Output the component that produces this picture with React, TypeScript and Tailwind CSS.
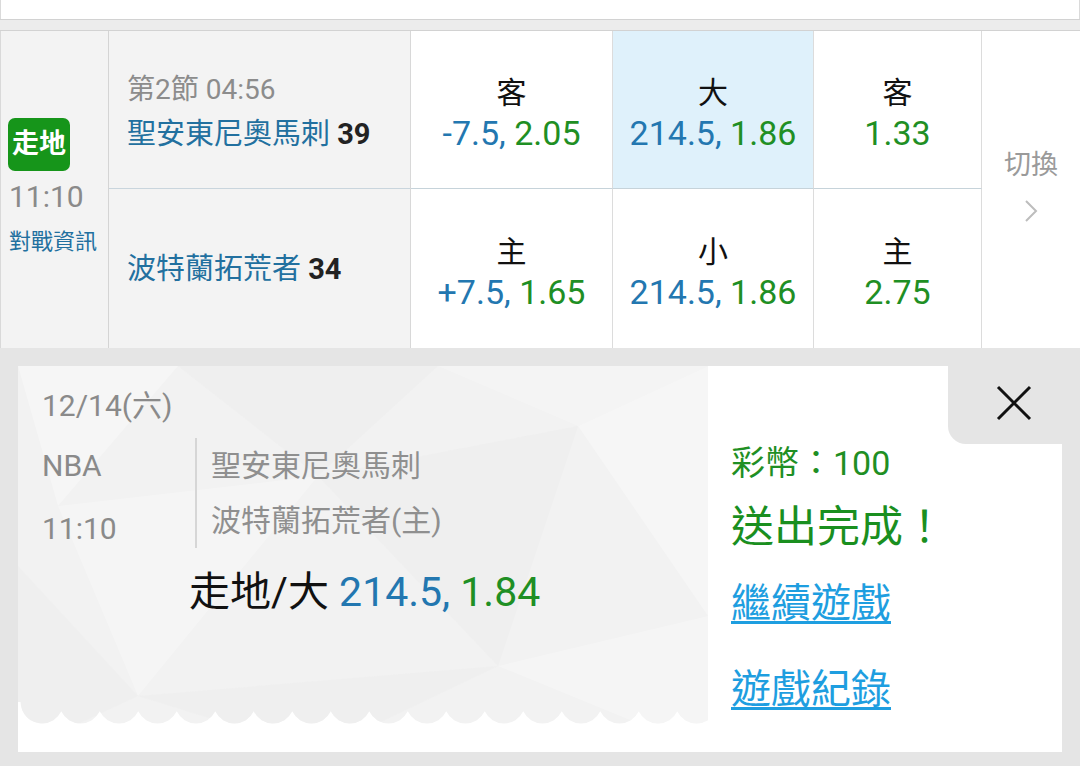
import React from 'react'

const tri = [
  { p: '0,0 160,0 40,140', f: '#ffffff', o: 0.3 },
  { p: '160,0 420,0 300,110', f: '#ebebeb', o: 0.35 },
  { p: '40,140 300,110 120,330', f: '#ffffff', o: 0.25 },
  { p: '300,110 560,60 480,300', f: '#ececec', o: 0.4 },
  { p: '560,60 690,0 690,250', f: '#ffffff', o: 0.3 },
  { p: '420,0 690,0 560,60', f: '#ffffff', o: 0.2 },
  { p: '120,330 480,300 300,386', f: '#ebebeb', o: 0.35 },
  { p: '480,300 690,250 690,386', f: '#ffffff', o: 0.25 },
  { p: '0,200 120,330 0,386', f: '#ececec', o: 0.35 },
]

function OddsCell({
  label,
  line,
  odds,
  active,
  bottom,
  w,
}: {
  label: string
  line?: string
  odds: string
  active?: boolean
  bottom?: boolean
  w: string
}) {
  return (
    <div
      className={`${w} flex flex-col items-center justify-center pt-[7px] border-r border-[#dcdcdc] ${
        bottom ? 'flex-1' : 'h-[158px] border-b border-b-[#c6d3da]'
      } ${active ? 'bg-[#dff1fb]' : 'bg-white'}`}
    >
      <div className="text-[30px] leading-[41px] text-[#111]">{label}</div>
      <div className="text-[34px] leading-[41px] whitespace-nowrap">
        {line && <span className="text-[#2377b0]">{line}, </span>}
        <span className="text-[#1f8f24]">{odds}</span>
      </div>
    </div>
  )
}

function OddsColumn(props: { top: any; bot: any; w: string }) {
  return (
    <div className="flex flex-col">
      <OddsCell {...props.top} w={props.w} />
      <OddsCell {...props.bot} w={props.w} bottom />
    </div>
  )
}

function LeftPanelBg() {
  const circles = []
  for (let i = 0; i < 19; i++) circles.push(24 + i * 38.5)
  return (
    <svg className="absolute inset-0" width="690" height="386" viewBox="0 0 690 386">
      <defs>
        <clipPath id="scallop">
          <rect x="0" y="0" width="690" height="336" />
          {circles.map((cx) => (
            <circle key={cx} cx={cx} cy="336" r="21.4" />
          ))}
        </clipPath>
      </defs>
      <g clipPath="url(#scallop)">
        <rect x="0" y="0" width="690" height="386" fill="#f2f2f2" />
        {tri.map((t) => (
          <polygon key={t.p} points={t.p} fill={t.f} opacity={t.o} />
        ))}
      </g>
    </svg>
  )
}

export default function App() {
  return (
    <div className="w-[1080px] h-[766px] overflow-hidden bg-[#e5e5e5] font-[Roboto,'Noto_Sans_CJK_TC',sans-serif]">
      <div className="h-[19px] bg-white border-l border-r border-[#dadada]" />
      <div className="h-[12px] bg-[#ececec] border-y border-[#d2d2d2]" />

      {/* match table */}
      <div className="flex h-[317px] border-l border-[#d9d9d9]">
        <div className="w-[108px] bg-[#f3f3f3] border-r border-[#d4d4d4] pl-[7px] pt-[87px]">
          <div className="w-[62px] h-[53px] rounded-[7px] bg-[#16951a] flex items-center justify-center text-white font-bold text-[27px] leading-none">
            走地
          </div>
          <div className="text-[30px] leading-[34px] text-[#8a8a8a] mt-[9px] pl-[1px]">11:10</div>
          <div className="text-[22px] leading-[28px] text-[#22709f] mt-[14px] pl-[1px]">對戰資訊</div>
        </div>

        <div className="w-[302px] flex flex-col bg-[#f3f3f3] border-r border-[#d8d8d8]">
          <div className="h-[158px] border-b border-[#c9d5dd] pl-[18px] flex flex-col justify-center pt-[5px]">
            <div className="text-[28px] leading-[45px] text-[#8c8c8c]">第2節 04:56</div>
            <div className="text-[29px] leading-[45px] text-[#22709f] whitespace-nowrap">
              聖安東尼奧馬刺 <span className="font-bold text-[#222]">39</span>
            </div>
          </div>
          <div className="flex-1 pl-[18px] flex items-center pt-[2px]">
            <div className="text-[29px] leading-[45px] text-[#22709f] whitespace-nowrap">
              波特蘭拓荒者 <span className="font-bold text-[#222]">34</span>
            </div>
          </div>
        </div>

        <OddsColumn
          w="w-[202px]"
          top={{ label: '客', line: '-7.5', odds: '2.05' }}
          bot={{ label: '主', line: '+7.5', odds: '1.65' }}
        />
        <OddsColumn
          w="w-[201px]"
          top={{ label: '大', line: '214.5', odds: '1.86', active: true }}
          bot={{ label: '小', line: '214.5', odds: '1.86' }}
        />
        <OddsColumn w="w-[168px]" top={{ label: '客', odds: '1.33' }} bot={{ label: '主', odds: '2.75' }} />

        <div className="flex-1 bg-white flex flex-col items-center justify-center pb-[8px]">
          <div className="text-[27px] leading-[34px] text-[#9a9a9a]">切換</div>
          <svg width="14" height="24" viewBox="0 0 14 24" className="mt-[17px]">
            <path d="M2 2 L12 12 L2 22" fill="none" stroke="#bdbdbd" strokeWidth="2" />
          </svg>
        </div>
      </div>

      {/* result card */}
      <div className="pl-[18px] pt-[18px]">
        <div className="relative flex w-[1044px] h-[386px] bg-white">
          <div className="relative w-[690px] h-full">
            <LeftPanelBg />
            <div className="relative pl-[24px] pt-[20px]">
              <div className="text-[30px] leading-[40px] text-[#8a8a8a]">12/14(六)</div>
              <div className="flex mt-[12px]">
                <div className="w-[153px] text-[30px] text-[#8a8a8a]">
                  <div className="leading-[56px]">NBA</div>
                  <div className="leading-[56px] mt-[7px]">11:10</div>
                </div>
                <div className="self-start h-[110px] border-l-2 border-[#d6d6d6] pl-[14px] text-[30px] leading-[55px] text-[#8f8f8f]">
                  <div>聖安東尼奧馬刺</div>
                  <div>波特蘭拓荒者(主)</div>
                </div>
              </div>
              <div className="pl-[147px] mt-[10px] text-[41px] leading-[50px] whitespace-nowrap">
                <span className="text-[#111]">走地/大 </span>
                <span className="text-[#2377b0]">214.5, </span>
                <span className="text-[#1f8f24]">1.84</span>
              </div>
            </div>
          </div>

          <div className="flex-1 pl-[23px] pt-[77px] flex flex-col items-start">
            <div className="text-[34px] leading-[40px] text-[#1f8f24]">彩幣：100</div>
            <div className="text-[43px] leading-[48px] text-[#1a8f1f] mt-[20px]">送出完成！</div>
            <a className="text-[40px] leading-[48px] text-[#1e9ee0] underline decoration-[3px] underline-offset-[4px] mt-[29px]">
              繼續遊戲
            </a>
            <a className="text-[40px] leading-[48px] text-[#1e9ee0] underline decoration-[3px] underline-offset-[4px] mt-[38px]">
              遊戲紀錄
            </a>
          </div>

          <div className="absolute top-0 right-0 w-[114px] h-[78px] bg-[#e5e5e5] rounded-bl-[18px] flex items-center justify-center pl-[18px] pb-[4px]">
            <svg width="36" height="36" viewBox="0 0 36 36">
              <path d="M2 2 L34 34 M34 2 L2 34" stroke="#111" strokeWidth="3" fill="none" />
            </svg>
          </div>
        </div>
      </div>
    </div>
  )
}
